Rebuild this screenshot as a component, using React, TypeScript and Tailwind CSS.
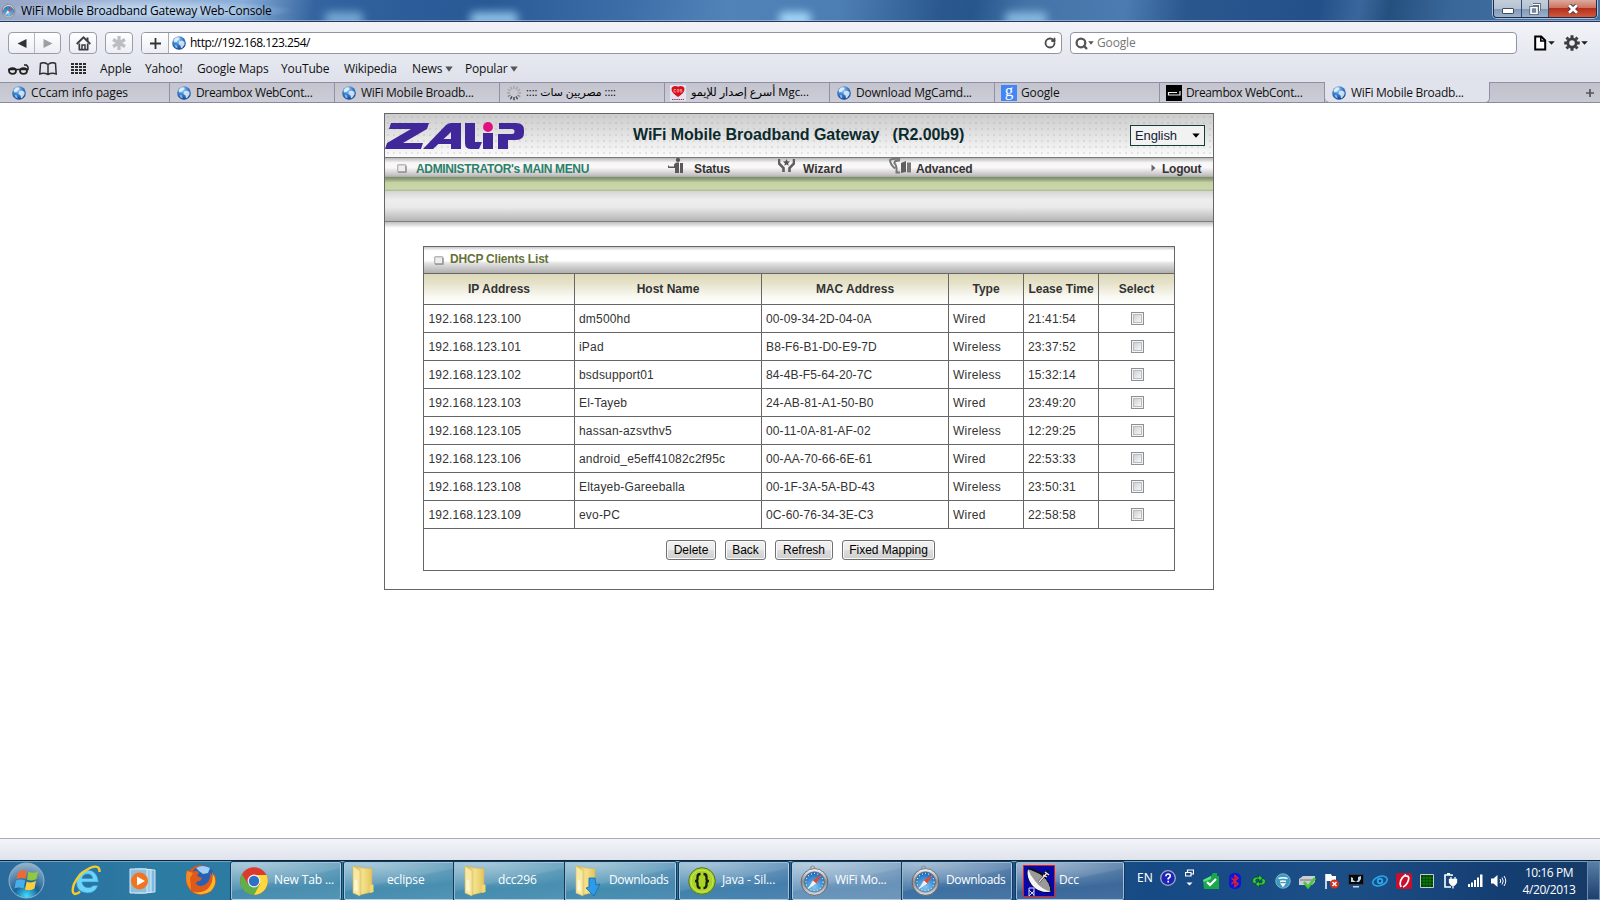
import React from "react";
import { RotateCw, Search } from "lucide-react";

const ui = "font-['Open_Sans','Noto_Sans','DejaVu_Sans',sans-serif]";

function Globe() {
  return (
    <svg width="14" height="14" viewBox="0 0 14 14" className="shrink-0">
      <defs>
        <radialGradient id="globe" cx="40%" cy="25%" r="80%">
          <stop offset="0" stopColor="#b8d8f5" />
          <stop offset="0.45" stopColor="#3b83d0" />
          <stop offset="1" stopColor="#0b3c8c" />
        </radialGradient>
      </defs>
      <circle cx="7" cy="7" r="6.8" fill="url(#globe)" />
      <path d="M1.5 4 4 1.500 7 1.500 7.500 3 5.500 4.500 4.500 6 3 6 2.500 7Z" fill="#e4f1fc" opacity=".9" />
      <path d="M7 5.500 10 4.500 12.500 6 12.500 8.500 10.500 11.500 9 12.500 8.500 9.500 6.500 8Z" fill="#e4f1fc" opacity=".85" />
      <path d="M2.500 8.500 5 9.500 5.500 12.500 3.500 11.500Z" fill="#9fcdf3" opacity=".8" />
    </svg>
  );
}

function Compass({ size }: { size: number }) {
  return (
    <svg width={size} height={size} viewBox="0 0 30 32" className="shrink-0">
      <defs>
        <linearGradient id="rim" x1="0" y1="0" x2="0" y2="1">
          <stop offset="0" stopColor="#f5f5f5" />
          <stop offset="0.5" stopColor="#8b8f94" />
          <stop offset="1" stopColor="#dcdcdc" />
        </linearGradient>
        <radialGradient id="dial" cx="50%" cy="75%" r="75%">
          <stop offset="0" stopColor="#7cc9f5" />
          <stop offset="1" stopColor="#1560b4" />
        </radialGradient>
      </defs>
      <circle cx="13" cy="3" r="2" fill="none" stroke="#8d949c" strokeWidth="1.2" />
      <circle cx="15" cy="17.5" r="13.8" fill="url(#rim)" stroke="#54585e" strokeWidth="0.8" />
      <circle cx="15" cy="17.5" r="10.5" fill="url(#dial)" stroke="#6a6e74" strokeWidth="0.8" />
      <circle cx="15" cy="17.5" r="8.8" fill="none" stroke="#e5f2fb" strokeWidth="1.2" strokeDasharray="1 2.4" />
      <path d="M22.5 9.5 16.8 19 13.4 16Z" fill="#e8452c" />
      <path d="M7.5 25.5 13.4 16 16.8 19Z" fill="#f3f3f3" />
    </svg>
  );
}

function Down({ className = "" }: { className?: string }) {
  return (
    <svg width="8" height="6" viewBox="0 0 8 6" preserveAspectRatio="none" className={"shrink-0 " + className}>
      <path d="M0.3 0.5h7.4L4 5.8z" fill="currentColor" />
    </svg>
  );
}

function Spinner() {
  return (
    <svg width="16" height="16" viewBox="-8 -8 16 16" className="shrink-0">
      {[0, 1, 2, 3, 4, 5, 6, 7, 8, 9, 10, 11].map((i) => (
        <path
          key={i}
          d="M0 -4v-3.2"
          stroke={i >= 5 && i <= 7 ? "#444" : i === 4 || i === 8 ? "#888" : "#a4a4a8"}
          strokeWidth="1.4"
          transform={`rotate(${i * 30})`}
        />
      ))}
    </svg>
  );
}

function HeartIcon() {
  return (
    <svg width="16" height="16" viewBox="0 0 16 16" className="shrink-0">
      <path d="M0 0h16v16H0z" fill="#e3e6f2" />
      <path d="M8 12C4 9.500 1.500 7 1.500 4 1.500 1 6 0 8 1.800 10 0 14.500 1 14.500 4 14.500 7 12 9.500 8 12Z" fill="#d8101a" />
      <path d="M6 4.500h-2v2.500h2M7.200 4.500v2.500h1.600v-2.500zM12 4.500h-2v1.200h2v1.300h-2" fill="none" stroke="#f5b5b5" strokeWidth="0.7" />
      <path d="M2 14.500h12" stroke="#a03850" strokeWidth="1.200" strokeDasharray="1.500 0.700" />
    </svg>
  );
}

function GoogleFav() {
  return (
    <span className="flex h-4 w-4 shrink-0 items-center justify-center bg-[#4285f4] pb-[4px] font-['Liberation_Serif',serif] text-[17px] leading-none text-white">
      g
    </span>
  );
}

function DreamFav() {
  return (
    <svg width="16" height="16" viewBox="0 0 16 16" className="shrink-0">
      <path d="M0 0h16v16H0z" fill="#000" />
      <path d="M11 7.500H2.500V10H14V6" fill="none" stroke="#eee" strokeWidth="1.200" />
    </svg>
  );
}

const tabs = [
  { icon: <Globe />, label: "CCcam info pages", w: "w-[170px] pl-[12px]", t: "ml-[5px] tracking-[-0.17px]" },
  { icon: <Globe />, label: "Dreambox WebCont...", w: "w-[165px] pl-[7px]", t: "ml-[5px] tracking-[-0.35px]" },
  { icon: <Globe />, label: "WiFi Mobile Broadb...", w: "w-[165px] pl-[7px]", t: "ml-[5px] tracking-[-0.27px]" },
  { icon: <Spinner />, label: ":::: مصريين سات ::::", w: "w-[165px] pl-[6px]", t: "ml-[4px] text-[10.9px] text-black" },
  { icon: <HeartIcon />, label: "أسرع إصدار للإيمو Mgc...", w: "w-[165px] pl-[5px]", t: "ml-[5px] text-[11.3px] text-black" },
  { icon: <Globe />, label: "Download MgCamd...", w: "w-[165px] pl-[7px]", t: "ml-[5px] tracking-[-0.2px]" },
  { icon: <GoogleFav />, label: "Google", w: "w-[165px] pl-[6px]", t: "ml-[4px] tracking-[-0.15px]" },
  { icon: <DreamFav />, label: "Dreambox WebCont...", w: "w-[165px] pl-[6px]", t: "ml-[4px] tracking-[-0.35px]" },
];

const rows = [
  ["192.168.123.100", "dm500hd", "00-09-34-2D-04-0A", "Wired", "21:41:54"],
  ["192.168.123.101", "iPad", "B8-F6-B1-D0-E9-7D", "Wireless", "23:37:52"],
  ["192.168.123.102", "bsdsupport01", "84-4B-F5-64-20-7C", "Wireless", "15:32:14"],
  ["192.168.123.103", "El-Tayeb", "24-AB-81-A1-50-B0", "Wired", "23:49:20"],
  ["192.168.123.105", "hassan-azsvthv5", "00-11-0A-81-AF-02", "Wireless", "12:29:25"],
  ["192.168.123.106", "android_e5eff41082c2f95c", "00-AA-70-66-6E-61", "Wired", "22:53:33"],
  ["192.168.123.108", "Eltayeb-Gareeballa", "00-1F-3A-5A-BD-43", "Wireless", "23:50:31"],
  ["192.168.123.109", "evo-PC", "0C-60-76-34-3E-C3", "Wired", "22:58:58"],
];

const cellTracking = [
  "pl-[4.5px] tracking-[0.17px]",
  "pl-[4px] tracking-[0.18px]",
  "pl-[4px] tracking-[0.13px]",
  "pl-[4px] tracking-[0.25px]",
  "pl-[4px] tracking-[0.13px]",
];

const cols = "grid grid-cols-[151px_187px_187px_75px_75px_76px]";
const btn =
  "flex h-[22px] items-center justify-center rounded-[4px] border border-[#9a9cab] bg-gradient-to-b from-white to-[#eceef4] text-[#3a3d42]";
const glow = "absolute top-[12px] h-[14px] rounded-[5px] bg-[#a2d6f8] blur-[4px]";

function TitleBar() {
  return (
    <div className="relative flex h-[22px] items-start justify-between overflow-hidden border-b border-[#26395c] bg-[linear-gradient(100deg,#98a6c6_0,#a3b7d8_130px,#86add8_240px,#3565a0_310px,#2b5b98_420px,#2a5a96_480px,#3d6ea8_620px,#5283b8_720px,#4c7db3_830px,#2a588e_930px,#27568d_960px,#4473a7_1010px,#4b7bb0_1110px,#2a578e_1170px,#24508a_1300px,#3a679b_1340px,#24507f_1370px,#3a679a_1430px,#4a76a6_1600px)]">
      <div className="flex h-[21px] items-center bg-[radial-gradient(ellipse_at_center,#bcd4ee_20%,transparent_72%)] pr-5 pl-[1px]">
        <Compass size={15} />
        <span className="mt-px ml-[5px] text-[12px] tracking-[-0.2px] text-black">WiFi Mobile Broadband Gateway Web-Console</span>
      </div>
      <div className={glow + " left-[325px] w-[38px] opacity-60"} />
      <div className={glow + " left-[470px] w-[48px] opacity-80"} />
      <div className={glow + " left-[779px] w-[32px]"} />
      <div className={glow + " left-[1005px] w-[42px] opacity-70"} />
      <div className="absolute inset-x-0 bottom-0 h-px bg-[#b4cbe4]/60" />
      <div className="relative mr-[3px] flex h-[18px] overflow-hidden rounded-b-[4px] border border-t-0 border-[#1d2d48] shadow-[0_0_0_1px_#a9c0da]">
        <div className="flex w-[28px] items-center justify-center border-r border-[#33496b] bg-[linear-gradient(#c3cedb_0,#b4c2d2_50%,#7f98b5_52%,#9db3cb_100%)] pt-1">
          <span className="h-[6px] w-[12px] rounded-[1px] border border-[#414b5c] bg-white" />
        </div>
        <div className="flex w-[27px] items-center justify-center border-r border-[#33496b] bg-[linear-gradient(#c3cedb_0,#b4c2d2_50%,#7f98b5_52%,#9db3cb_100%)]">
          <svg width="12" height="12" viewBox="0 0 12 12">
            <path d="M4 1.500h6.500v6.500" fill="none" stroke="#414b5c" strokeWidth="2.600" />
            <path d="M4 1.500h6.500v6.500" fill="none" stroke="#fff" strokeWidth="1.200" />
            <path d="M2 4.500h6v6h-6z" fill="#6f86a5" stroke="#414b5c" strokeWidth="3" />
            <path d="M2 4.500h6v6h-6z" fill="#6f86a5" stroke="#fff" strokeWidth="1.700" />
          </svg>
        </div>
        <div className="flex w-[47px] items-center justify-center bg-[linear-gradient(#dcaa9d_0,#cf7362_45%,#b5301b_50%,#d0583d_100%)]">
          <svg width="12" height="10" viewBox="0 0 12 10">
            <path d="M2 1.200 10 8.800M10 1.200 2 8.800" stroke="#54333a" strokeWidth="4.600" />
            <path d="M2 1.200 10 8.800M10 1.200 2 8.800" stroke="#fff" strokeWidth="2.800" />
          </svg>
        </div>
      </div>
    </div>
  );
}

function Toolbar() {
  return (
    <div className="flex h-[40px] items-center pt-[2px] pl-[8px]">
      <div className={btn + " w-[53px]"}>
        <span className="flex h-full flex-1 items-center justify-center border-r border-[#b4b6bc]">
          <svg width="10" height="9" viewBox="0 0 10 9"><path d="M9.500 0v9L0.500 4.500z" fill="#303236" /></svg>
        </span>
        <span className="flex flex-1 items-center justify-center">
          <svg width="10" height="9" viewBox="0 0 10 9"><path d="M0.500 0v9L9.500 4.500z" fill="#9c9ea3" /></svg>
        </span>
      </div>
      <div className={btn + " ml-[8px] w-[28px]"}>
        <svg width="15" height="15" viewBox="0 0 15 15">
          <path d="M0.700 8 7.500 1.400 14.300 8" fill="none" stroke="#3a3d42" strokeWidth="1.900" />
          <path d="M10.500 1.500h2v4l-2-2z" fill="#3a3d42" />
          <path d="M3.300 7.500v6h8.400v-6M3 13.600h9" fill="none" stroke="#3a3d42" strokeWidth="1.700" />
          <path d="M6 13V9h3v4" fill="none" stroke="#3a3d42" strokeWidth="1.500" />
        </svg>
      </div>
      <div className={btn + " ml-[8px] w-[28px]"}>
        <svg width="16" height="16" viewBox="-8 -8 16 16">
          <path d="M0-7V7M-6-3.500 6 3.500M6-3.500-6 3.500" stroke="#bcbdc1" strokeWidth="3.200" />
        </svg>
      </div>
      <div className="ml-[8px] flex h-[22px] w-[921px] items-center rounded-[4px] border border-[#9294a6] bg-white">
        <span className="flex h-full w-[27px] shrink-0 items-center justify-center rounded-l-[3px] border-r border-[#a9abb8] bg-gradient-to-b from-white to-[#eceef4]">
          <svg width="11" height="11" viewBox="0 0 11 11"><path d="M5.500 0v11M0 5.500h11" stroke="#303236" strokeWidth="1.800" /></svg>
        </span>
        <span className="ml-[3px] flex"><Globe /></span>
        <span className="ml-[4px] flex-1 text-[12px] tracking-[-0.5px]">http://192.168.123.254/</span>
        <RotateCw size={12} strokeWidth={3.6} className="mr-[5px] text-[#4a4a4a]" />
      </div>
      <div className="ml-[8px] flex h-[22px] w-[447px] items-center rounded-[4px] border border-[#9294a6] bg-white text-[#555]">
        <Search size={13} strokeWidth={4.2} className="ml-[4px]" />
        <Down className="h-[4px] w-[6px]" />
        <span className="ml-[3px] text-[12px] tracking-[-0.15px] text-[#777]">Google</span>
      </div>
      <div className="ml-[16px] flex items-center text-[#1c1c1c]">
        <svg width="14" height="16" viewBox="0 0 14 16">
          <path d="M2.200 1.500h6l4 4V14.500H2.200z" fill="#fff" stroke="#000" strokeWidth="2" />
          <path d="M7.800 1v5h5" fill="none" stroke="#000" strokeWidth="1.600" />
        </svg>
        <Down className="ml-[1px] h-[4px] w-[7px]" />
        <svg width="16" height="16" viewBox="-8 -8 16 16" className="ml-[9px]">
          <circle r="4.200" fill="none" stroke="#3c3c40" strokeWidth="2.800" />
          <path d="M0-7.800V-5M0 7.800V5M-7.800 0H-5M7.800 0H5M-5.500-5.500-3.800-3.800M5.500 5.500 3.800 3.800M-5.500 5.500-3.800 3.800M5.500-5.500 3.800-3.800" stroke="#3c3c40" strokeWidth="3" />
        </svg>
        <Down className="ml-[1px] h-[4px] w-[7px]" />
      </div>
    </div>
  );
}

function Bookmarks() {
  return (
    <div className="flex h-[20px] items-center pb-[7px] pl-[8px] text-[12px] tracking-[-0.13px] text-[#111]">
      <svg width="21" height="12" viewBox="0 0 21 12">
        <ellipse cx="4.500" cy="8" rx="3.500" ry="2.800" fill="none" stroke="#222" strokeWidth="1.800" />
        <ellipse cx="15.500" cy="8" rx="3.500" ry="2.800" fill="none" stroke="#222" strokeWidth="1.800" />
        <path d="M0 6.500H20.500M20 7V4L18.500 2H16" fill="none" stroke="#222" strokeWidth="1.500" />
      </svg>
      <svg width="18" height="14" viewBox="0 0 18 14" className="ml-[10px]">
        <path d="M9 2.500Q5-0.500 1.500 1.500L0.800 12Q5 10.500 9 12.500 13 10.500 17.200 12L16.500 1.500Q13-0.500 9 2.500V12.500" fill="none" stroke="#333" strokeWidth="1.500" />
      </svg>
      <svg width="16" height="12" viewBox="0 0 16 12" className="ml-[14px]">
        {[0, 1, 2, 3].map((c) =>
          [0, 1, 2, 3].map((r) => <rect key={`${c}-${r}`} x={c * 4} y={r * 3} width="3" height="2" fill="#2c2c2c" />),
        )}
      </svg>
      <span className="ml-[13px] w-[45px]">Apple</span>
      <span className="w-[52px]">Yahoo!</span>
      <span className="w-[84px]">Google Maps</span>
      <span className="w-[63px]">YouTube</span>
      <span className="w-[68px] tracking-[-0.2px]">Wikipedia</span>
      <span className="flex w-[53px] items-center">News<Down className="ml-[3px] text-[#555]" /></span>
      <span className="flex items-center tracking-[-0.2px]">Popular<Down className="ml-[3px] text-[#555]" /></span>
    </div>
  );
}

function TabBar() {
  return (
    <div className="flex h-[21px] border-b border-[#8a88a0] bg-[#c7c8d1] text-[12px] text-[#111]">
      {tabs.map((t, i) => (
        <div key={i} className={"flex items-center overflow-hidden border-t border-r border-[#918fa6] bg-gradient-to-b from-[#c3c4ce] to-[#cccdd6] whitespace-nowrap " + t.w}>
          {t.icon}
          <span className={t.t}>{t.label}</span>
        </div>
      ))}
      <div className="-mb-px flex w-[165px] items-center rounded-b-[5px] border-r border-b border-[#918fa6] bg-[#e1e3ec] pt-[2px] pl-[7px] whitespace-nowrap">
        <Globe />
        <span className="ml-[5px] tracking-[-0.27px]">WiFi Mobile Broadb...</span>
      </div>
      <div className="flex flex-1 items-center justify-end border-t border-[#918fa6] bg-gradient-to-b from-[#c0c1cb] to-[#c8c9d2] pr-[6px]">
        <svg width="8" height="8" viewBox="0 0 8 8"><path d="M4 0v8M0 4h8" stroke="#555" strokeWidth="1.700" /></svg>
      </div>
    </div>
  );
}

function Bullet() {
  return (
    <svg width="10" height="9" viewBox="0 0 10 9">
      <rect x="0.700" y="0.700" width="8.200" height="7.200" rx="1" fill="#eee" stroke="#b8b8b8" strokeWidth="1.400" />
      <path d="M1 8.200h8V2" fill="none" stroke="#8d8d8d" strokeWidth="1.200" />
    </svg>
  );
}

function Logo() {
  return (
    <svg width="140" height="28" viewBox="0 0 140 28">
      <g fill="#40279a">
        <path d="M6 1H44L42 7 18 21H38L36 27H0L2 21 26 7H4Z" />
        <path d="M66 1H76V27H66V10L48 27H38L61 3Q64 1 66 1Z" />
        <path d="M80 1H90V20H97L94 27H86Q80 27 80 21Z" />
        <path d="M98 11H108V27H98Z" />
        <path d="M114 1H131Q139 1 139 8V11Q139 18 131 18H123V27H113V12H127Q129.500 12 129.500 9.500 129.500 7 127 7H114Z" />
      </g>
      <path d="M54 17H67V22H50Z" fill="#40279a" />
      <circle cx="103" cy="5" r="4.900" fill="#e0117f" />
    </svg>
  );
}

function RouterPage() {
  return (
    <div className="flex h-[735px] flex-col items-start bg-white pt-[10px] pl-[384px] font-['Liberation_Sans',Arial,sans-serif] text-[12px]">
      <div className="h-[477px] w-[830px] border border-[#666]">
        <div className="flex h-[43px] items-center bg-[radial-gradient(circle,rgba(150,150,150,0.2)_0.8px,transparent_1.3px),linear-gradient(#cccccc,#fbfbfb)] bg-[size:6px_6px,100%_100%]">
          <div className="w-[248px]"><Logo /></div>
          <div className="w-[497px] pb-[2px] text-[16px] font-bold tracking-[-0.05px] whitespace-pre text-[#0b2a2c]">WiFi Mobile Broadband Gateway   (R2.00b9)</div>
          <div className="flex h-[21px] w-[75px] items-center justify-between border border-[#173b38] bg-[#f2f2f2] px-[4px] text-[13px] tracking-[-0.1px] text-[#123]">
            English
            <Down className="h-[5px] w-[8px] text-black" />
          </div>
        </div>
        <div className="flex h-[20px] items-center border-t border-[#777] bg-[linear-gradient(#b9b9b9_0,#f7f7f7_25%,#fbf7f8_50%,#c4c2c3_90%,#aaa_100%)] font-bold text-[#333]">
          <div className="flex w-[283px] items-center pt-[2px] pl-[12px]">
            <Bullet />
            <span className="ml-[9px] tracking-[-0.35px] text-[#2a8068]">ADMINISTRATOR's MAIN MENU</span>
          </div>
          <div className="flex w-[110px] items-center">
            <svg width="17" height="15" viewBox="0 0 17 15" className="-mt-[4px]">
              <circle cx="10" cy="2" r="2.100" fill="#555" />
              <path d="M0 7.500h1v1h5V6.500L8 4.500h3V15H7V10H0zM12 5h3v10h-3z" fill="#5a5a5a" />
            </svg>
            <span className="mt-[2px] ml-[9px] tracking-[-0.1px]">Status</span>
          </div>
          <div className="flex w-[111px] items-center">
            <svg width="17" height="15" viewBox="0 0 17 15" className="-mt-[4px]">
              <path d="M1 1V5.500L5.500 10V14M16 1V5.500L11.500 10V14" fill="none" stroke="#606060" strokeWidth="2.600" />
              <path d="M8.500 1 9.500 3.300 12 3.600 10.100 5.200 10.700 7.800 8.500 6.400 6.300 7.800 6.900 5.200 5 3.600 7.500 3.300Z" fill="#555" />
            </svg>
            <span className="mt-[2px] ml-[8px]">Wizard</span>
          </div>
          <div className="flex w-[262px] items-center">
            <svg width="23" height="16" viewBox="0 0 23 16" className="-mt-[4px]">
              <path d="M11 1Q4 0 1 2 1 6 6 10.500M11 2.500Q5 2 5.500 5.500 8 7 7.500 14.500H11" fill="none" stroke="#777" strokeWidth="2" />
              <path d="M12 5 17 3V14L12 15Z" fill="#606060" />
              <path d="M18 4.500h4v10h-4z" fill="#777" />
            </svg>
            <span className="mt-[2px] ml-[4px] tracking-[-0.1px]">Advanced</span>
          </div>
          <svg width="5" height="8" viewBox="0 0 5 8" className="mt-[1px]"><path d="M0.500 0.500 4.500 4 0.500 7.500z" fill="#666" /></svg>
          <span className="mt-[2px] ml-[6px] tracking-[-0.25px]">Logout</span>
        </div>
        <div className="h-[14px] bg-[linear-gradient(#7c8a68_0,#97a67d_20%,#c5d3a4_40%,#c9d6a9_85%,#aab48f_100%)]" />
        <div className="h-[31px] border-b border-[#7f7f7f] bg-[linear-gradient(#d5d5d5_0,#eeeeee_30%,#e9e9e9_55%,#b4b4b4_100%)]" />
        <div className="h-[6px] bg-gradient-to-b from-[#bfbfbf] to-white" />
        <div className="mt-[18px] ml-[38px] w-[752px] border-t border-l border-[#666] text-[#333]">
          <div className="flex h-[27px] items-center border-r border-b border-[#666] bg-[linear-gradient(#c8c8c8_0,#ffffff_14%,#ffffff_52%,#e3e3e3_62%,#b0aeaf_100%)] pb-[2px] pl-[10px]">
            <span className="mt-[3px]"><Bullet /></span>
            <span className="ml-[6px] font-bold tracking-[-0.2px] text-[#66713a]">DHCP Clients List</span>
          </div>
          <div className={cols + " h-[31px] bg-[linear-gradient(#ddd8b8_0,#e6e2ca_30%,#fafaf5_75%,#ffffff_100%)] font-bold"}>
            {["IP Address", "Host Name", "MAC Address", "Type", "Lease Time", "Select"].map((h) => (
              <div key={h} className="flex items-center justify-center border-r border-b border-[#666] whitespace-nowrap">{h}</div>
            ))}
          </div>
          {rows.map((r) => (
            <div key={r[0]} className={cols + " h-[28px]"}>
              {r.map((c, i) => (
                <div key={c} className={"flex items-center border-r border-b border-[#666] whitespace-nowrap " + cellTracking[i]}>{c}</div>
              ))}
              <div className="flex items-center justify-center border-r border-b border-[#666] pl-[2px]">
                <span className="flex h-[13px] w-[13px] items-center justify-center border border-[#8e8f8f] bg-[#f4f4f4]">
                  <span className="h-[9px] w-[9px] border border-[#b9bcc2] bg-gradient-to-br from-[#cdd1d7] to-[#f6f6f6]" />
                </span>
              </div>
            </div>
          ))}
          <div className="flex h-[42px] items-center justify-center gap-[9px] border-r border-b border-[#666] pl-[3px] text-black">
            {[["Delete", "w-[50px]"], ["Back", "w-[41px]"], ["Refresh", "w-[58px]"], ["Fixed Mapping", "w-[93px]"]].map(([l, w]) => (
              <span key={l} className={"flex h-[20px] items-center justify-center rounded-[3px] border border-[#707070] bg-[linear-gradient(#f2f2f2_0,#ebebeb_49%,#dddddd_50%,#cfcfcf_100%)] whitespace-nowrap shadow-[inset_0_0_0_1px_#fafafa] " + w}>{l}</span>
            ))}
          </div>
        </div>
      </div>
    </div>
  );
}

function Folder({ arrow = false }: { arrow?: boolean }) {
  return (
    <svg width="27" height="32" viewBox="0 0 27 32" className="shrink-0">
      <defs>
        <linearGradient id="leaf" x1="0" y1="0" x2="1" y2="0">
          <stop offset="0" stopColor="#d9b94e" />
          <stop offset="0.5" stopColor="#f4e08d" />
          <stop offset="1" stopColor="#e3c45c" />
        </linearGradient>
      </defs>
      <path d="M3 1 12 3 21 3.500V27L9 30Z" fill="url(#leaf)" stroke="#cfb152" strokeWidth="0.500" />
      <path d="M2 1 9 6V31L2 28Z" fill="#f8e9a2" stroke="#d8bd5e" strokeWidth="0.600" />
      <path d="M3.500 14 6.500 16V27L3.500 25Z" fill="#fffbe6" opacity=".8" />
      <path d="M19 20q3-1 3.500 0v7l-3.500 1z" fill="#f1d873" />
      {arrow && <path d="M15 13h6l1 7 4-1-6 12-8-8 3-1z" fill="#2b9bea" stroke="#1668b0" strokeWidth="0.800" />}
    </svg>
  );
}

function Chrome() {
  return (
    <svg width="28" height="28" viewBox="-14 -14 28 28" className="shrink-0">
      <circle r="13.800" fill="#dd3a2e" />
      <path d="M-12-7A14 14 0 0 0 0 14L6 3.500 0 6.500-6 3Z" fill="#5eb04a" />
      <path d="M0 14A14 14 0 0 0 12.500-6H1L6 3Z" fill="#fbd93f" />
      <circle r="6.400" fill="#f2f2f2" />
      <circle r="5.200" fill="#2f6fc4" />
    </svg>
  );
}

function Braces() {
  return (
    <svg width="28" height="28" viewBox="0 0 28 28" className="shrink-0">
      <circle cx="14" cy="14" r="13.300" fill="#a9d427" stroke="#58751a" />
      <circle cx="14" cy="14" r="11" fill="none" stroke="#c9e85a" />
      <path d="M12.500 7Q9.500 7 9.500 10V12Q9.500 14 7 14 9.500 14 9.500 16V18Q9.500 21 12.500 21M15.500 7Q18.500 7 18.500 10V12Q18.500 14 21 14 18.500 14 18.500 16V18Q18.500 21 15.500 21" fill="none" stroke="#1a1f10" strokeWidth="2.300" />
    </svg>
  );
}

function Dish() {
  return (
    <svg width="32" height="32" viewBox="0 0 32 32" className="shrink-0">
      <path d="M0.500 0.500h31v31h-31z" fill="#0808a8" stroke="#f01818" />
      <path d="M5 4Q3 12 9 20T28 27Q28 18 20 11T5 4Z" fill="#9a9a9a" stroke="#000" />
      <path d="M5 4Q3 12 9 20T28 27Q18 24 12 16 7 10 5 4Z" fill="#f5f5f5" />
      <path d="M16 17 24 8M20 10l4 2M22 7l4 3M8 4l16 7M24 5l2 2" stroke="#111" strokeWidth="2" />
      <path d="M16 17 24 8M20 10l4 2M22 7l4 3" stroke="#eee" strokeWidth="1.200" />
      <path d="M6 31V23h5v8M6 31l5-5M6 25l5 5" fill="none" stroke="#ddd" />
    </svg>
  );
}

const task =
  "flex h-[38px] items-center overflow-hidden border border-[#bcdcee]/70 bg-[radial-gradient(ellipse_130px_26px_at_20%_0,rgba(255,255,255,0.45),transparent),linear-gradient(168deg,rgba(255,255,255,0.3)_0%,rgba(255,255,255,0.22)_46%,rgba(255,255,255,0.13)_50%,rgba(255,255,255,0.2)_100%)] text-white whitespace-nowrap tracking-[-0.12px] shadow-[0_0_0_1px_#16395a]";

function Tray() {
  return (
    <div className="flex h-full items-center text-white">
      <span className="ml-[13px] w-[23px] pb-[5px] font-['Noto_Sans',sans-serif] text-[12px]">EN</span>
      <svg width="16" height="16" viewBox="0 0 16 16" className="mb-[6px]">
        <circle cx="8" cy="8" r="7.300" fill="#1a24b8" stroke="#aab" strokeWidth="1.300" />
        <path d="M5.800 6.200Q6 4 8.200 4 10.300 4 10.300 6 10.300 7.300 8.200 8.500V9.500M8.200 10.800V12.400" fill="none" stroke="#fff" strokeWidth="1.600" />
      </svg>
      <svg width="9" height="17" viewBox="0 0 9 17" className="mr-[9px] mb-[7px] ml-[9px]">
        <path d="M2.500 3V1h6v4h-2M0.500 3.500h5.500v3.500H0.500z" fill="none" stroke="#fff" strokeWidth="1.200" />
        <path d="M1.500 13.500h6L4.500 16.500z" fill="#fff" />
      </svg>
      <div className="flex items-center gap-[8px]">
        <svg width="16" height="16" viewBox="0 0 16 16"><path d="M0 7 8 3l2-3h4v3h2v13H1z" fill="#18a84a" /><path d="M0 7 8 3v3L1 9z" fill="#5fe08a" /><path d="m4 9 3 3 6-6" fill="none" stroke="#fff" strokeWidth="2.200" /></svg>
        <svg width="16" height="16" viewBox="0 0 16 16"><rect x="2" width="12" height="16" rx="5" fill="#0a18d8" /><path d="m4.500 5 6.500 6L8 13.500v-11L11 5l-6.500 6" fill="none" stroke="#e8202c" strokeWidth="1.400" /></svg>
        <svg width="16" height="16" viewBox="0 0 16 16"><path d="M5 10.500H4Q1.500 10.500 1.500 8 1.500 4 7 4H8V1.500L11.500 5.200 8 8.500V6H7Q4.500 6 4.500 7.500M11 5.500Q14.500 5.500 14.500 8 14.500 12 9 12H8v2.500L4.500 11 8 7.800V10H9Q11.500 10 11.500 8.500" fill="#30d030" stroke="#042c08" strokeWidth="0.500" /></svg>
        <svg width="16" height="16" viewBox="0 0 16 16"><circle cx="8" cy="8" r="7.300" fill="#3c98bc" stroke="#a8d8e8" strokeWidth="0.600" /><path d="M3.500 5.500Q8 4 12.500 5.500M5 8.500Q8 7.500 11 8.500M6.500 11h3L8 13z" fill="none" stroke="#fff" strokeWidth="1.500" /></svg>
        <svg width="17" height="16" viewBox="0 0 17 16"><path d="M0 6 4 3h12v6l-3 3H0z" fill="#c9ced2" /><path d="M1 7h12" stroke="#777" /><path d="m5 9 4 5 7-9" fill="none" stroke="#4cc63c" strokeWidth="2.800" /></svg>
        <svg width="16" height="16" viewBox="0 0 16 16"><path d="M2 1v15" stroke="#fff" strokeWidth="1.500" /><path d="M2 1h5l1 2h4v6H7L6 8H2z" fill="#fff" /><circle cx="10.500" cy="11" r="4.500" fill="#d8301c" /><path d="m8.500 9 4 4m0-4-4 4" stroke="#fff" strokeWidth="1.500" /></svg>
        <svg width="16" height="16" viewBox="0 0 16 16"><path d="M0.500 1.500h15v10H0.500z" fill="#05080e" stroke="#333a44" /><path d="M3 9V4l2 1v2l3 2 2-2V4l3-1v3l-2 3zM5 13h6v1.500H5z" fill="#b8d8ee" /></svg>
        <svg width="16" height="16" viewBox="0 0 16 16"><ellipse cx="8" cy="8" rx="7.500" ry="4.500" transform="rotate(-20 8 8)" fill="none" stroke="#28a8e8" strokeWidth="1.600" /><circle cx="8" cy="8" r="3.200" fill="#28a8e8" /><circle cx="8" cy="8" r="1.300" fill="#0d3e78" /></svg>
        <svg width="16" height="16" viewBox="0 0 16 16"><rect width="16" height="16" rx="2" fill="#c8102e" /><path d="M10 1.500Q2 7 5 14M8 3Q14 2 12.500 7 11 12 7 14" fill="none" stroke="#fff" strokeWidth="1.700" /></svg>
        <svg width="14" height="14" viewBox="0 0 14 14"><path d="M0.500 0.500h13v13H0.500z" fill="#063c06" stroke="#ddd" strokeWidth="0.900" /><path d="M4 1v12M7 1v12M10 1v12M1 4h12M1 7h12M1 10h12" stroke="#109810" strokeWidth="0.700" /></svg>
        <svg width="16" height="16" viewBox="0 0 16 16" className="ml-[1px]"><path d="M9 3V2H2v12h6M4 0.800h3" fill="none" stroke="#fff" strokeWidth="1.600" /><path d="M6.500 6.500h7v3l-2 2.500H8.500l-2-2.500zM8 4v3M12 4v3M10 12v3.500" fill="#fff" stroke="#fff" strokeWidth="1.300" /></svg>
        <svg width="15" height="13" viewBox="0 0 15 13" className="ml-px"><path d="M0 10h2v3H0zM3 8.500h2V13H3zM6 6h2v7H6zM9 3.500h2V13H9zM12 0.500h2.500V13H12z" fill="#fff" /></svg>
        <svg width="16" height="14" viewBox="0 0 16 14"><path d="M0 4.500h2.500L6.500 1v12L2.500 9.500H0z" fill="#fff" /><path d="M9 5Q10.500 7 9 9M11 3.500Q13.500 7 11 10.500M13 2Q16.500 7 13 12" fill="none" stroke="#fff" strokeWidth="1" /></svg>
      </div>
      <div className="mt-px ml-[14px] flex w-[56px] flex-col items-center text-[12px] leading-[17px] tracking-[-0.45px]">
        <span>10:16 PM</span>
        <span>4/20/2013</span>
      </div>
    </div>
  );
}

function Taskbar() {
  return (
    <div className="flex h-[40px] items-center border-t border-[#0b2438] bg-[linear-gradient(90deg,#2a6a9c_0,#2c7ba3_150px,#267aa2_600px,#23689f_760px,#1d558f_1000px,#164a85_1150px,#1c4e86_1350px,#143e72_1500px,#163a66_1600px)] text-[12px] shadow-[inset_0_1px_0_#6fa5c4]">
      <div className="flex w-[231px] items-center">
        <svg width="37" height="37" viewBox="0 0 37 37" className="ml-[8px]">
          <defs>
            <radialGradient id="orb" cx="50%" cy="95%" r="90%">
              <stop offset="0" stopColor="#3fe0ff" />
              <stop offset="0.400" stopColor="#1b5f94" />
              <stop offset="1" stopColor="#90aec6" />
            </radialGradient>
          </defs>
          <circle cx="18.500" cy="18.500" r="17.500" fill="url(#orb)" stroke="#8db4cf" />
          <path d="M10 10Q14 7 19 9L17.500 17Q13 15 8.500 17Z" fill="#ee6a35" />
          <path d="M20.500 9.500Q25 12 30 9.500L28.500 17Q24 19.500 19 17.500Z" fill="#92c83e" />
          <path d="M8 18.500Q13 16.500 17.300 18.500L15.500 26.500Q11 24.500 6.500 26.500Z" fill="#4aaee8" />
          <path d="M18.700 19.500Q23 21.500 28 19L26.500 26.500Q22 29.500 17 27.500Z" fill="#fccf3c" />
        </svg>
        <svg width="30" height="32" viewBox="0 0 30 32" className="-mt-[2px] ml-[26px]">
          <path d="M16 6Q26 6 27.500 18H11Q12 24 18 23.500 21 23.500 22 21.500H27Q24 29.500 16 29 5 28 5.500 17.500 6 6.500 16 6ZM11 14.500H21.500Q21 10 16.500 10 12 10 11 14.500Z" fill="#6cd3fa" stroke="#2a92cc" strokeWidth="0.700" />
          <path d="M28.500 8Q29 0 19 4 8 9 3 20 0 29 4 30 7 30 9 27.500" fill="none" stroke="#f6cc2d" strokeWidth="2.400" />
        </svg>
        <svg width="28" height="26" viewBox="0 0 28 26" className="ml-[28px]">
          <path d="M10 1 26 2V24L10 25Z" fill="#7db9dc" stroke="#cde6f4" />
          <path d="M6 1 22 1.500V24.500L6 25Z" fill="#9fcbe6" stroke="#d8edf8" />
          <path d="M1 1H18V25H1Z" fill="#8fbfdf" stroke="#d8edf8" />
          <circle cx="10.500" cy="13" r="8.500" fill="#f3741e" />
          <path d="M8 8.500 16 13 8 17.500Z" fill="#fff" />
        </svg>
        <svg width="32" height="32" viewBox="0 0 32 32" className="-mt-[2px] ml-[28px]">
          <circle cx="16" cy="16" r="15" fill="#d9591a" />
          <circle cx="18" cy="13" r="11.500" fill="#2860b4" />
          <path d="M11 4Q17 0 25 4L23 9 18 10 14 7Z" fill="#9fd0f2" />
          <path d="M2 6 7 8Q11 6 14 8L12 12 17 14 15 17Q11 17 11 20 15 24 21 20 26 16 25 9 33 17 26 26 18 33 8 28-1 21 2 6Z" fill="#dd5a18" />
          <path d="M27 8Q34 18 26 27 17 33 8 28 20 30 25 22 29 16 27 8Z" fill="#fbb62e" />
          <path d="M2 7Q-1 18 6 26L5 14 8 9Z" fill="#f58a24" />
        </svg>
      </div>
      <div className={task + " w-[110px] rounded-[2px] pl-[8px]"}><Chrome /><span className="-mt-px ml-[6px]">New Tab ...</span></div>
      <div className={task + " ml-[3px] w-[110px] rounded-l-[2px] border-r-0 pl-[6px]"}><Folder /><span className="-mt-px ml-[9px]">eclipse</span></div>
      <div className={task + " w-[111px] border-r-0 pl-[8px]"}><Folder /><span className="-mt-px ml-[8px]">dcc296</span></div>
      <div className={task + " w-[111px] rounded-r-[2px] pl-[8px]"}><Folder arrow /><span className="-mt-px ml-[8px] tracking-[-0.35px]">Downloads</span></div>
      <div className={task + " ml-[3px] w-[110px] rounded-[2px] pl-[8px]"}><Braces /><span className="-mt-px ml-[6px]">Java - Sil...</span></div>
      <div className={task + " ml-[3px] w-[110px] rounded-l-[2px] bg-white/20 pl-[6px]"}><Compass size={31} /><span className="-mt-px ml-[5px] tracking-[-0.25px]">WiFi Mo...</span></div>
      <div className={task + " w-[110px] rounded-r-[2px] pl-[7px]"}><Compass size={31} /><span className="-mt-px ml-[5px] tracking-[-0.35px]">Downloads</span></div>
      <div className={task + " ml-[4px] w-[108px] rounded-[2px] pl-[6px]"}><Dish /><span className="-mt-px ml-[4px]">Dcc</span></div>
      <Tray />
      <div className="ml-auto h-full w-[13px] border border-[#6b8db0] bg-gradient-to-b from-[#5a7fa6] to-[#1c3f6c]" />
    </div>
  );
}

export default function App() {
  return (
    <div className={"flex h-[900px] w-[1600px] flex-col overflow-hidden bg-white text-black " + ui}>
      <TitleBar />
      <div className="h-[60px] bg-gradient-to-b from-[#f1f3f8] to-[#dfe1eb]">
        <Toolbar />
        <Bookmarks />
      </div>
      <TabBar />
      <RouterPage />
      <div className="h-[22px] border-t border-[#a9abbd] bg-gradient-to-b from-[#f4f5fa] to-[#e0e3ec]" />
      <Taskbar />
    </div>
  );
}
